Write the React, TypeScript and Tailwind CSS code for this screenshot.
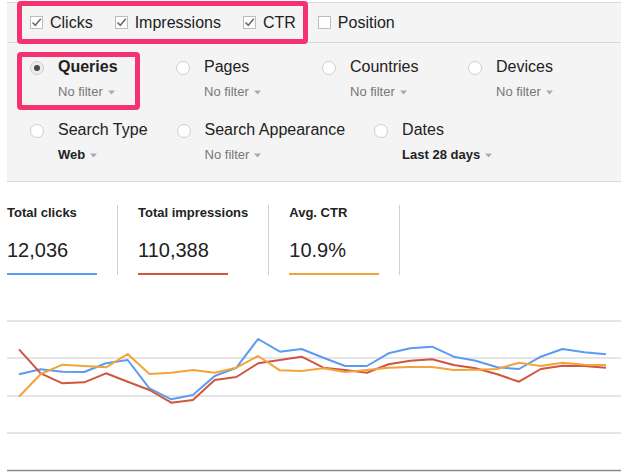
import React from 'react';

const blue = [374.3, 369.3, 371.7, 372, 363.3, 360, 388.3, 399.3, 395, 376, 367.7, 339, 351.7, 349, 357.7, 366, 366, 353.3, 348.3, 346.7, 356.7, 360.7, 367.3, 369, 356.7, 349, 352.3, 354.3];
const red = [349.3, 373.3, 383.3, 382.3, 373.3, 381.7, 390, 402.7, 400, 380, 377, 363.3, 360, 356.7, 367.7, 370, 372.7, 364.3, 360.7, 359.3, 365, 368.3, 374.3, 381.7, 369, 365.7, 366, 367.7];
const orange = [396.7, 374, 364.7, 366, 367.3, 354, 374, 372.7, 370, 372.7, 367.7, 356, 370.3, 371, 368.3, 372, 370, 367.7, 367, 367, 370, 369.7, 369, 362.7, 366, 362.7, 364.7, 365];

const toPoints = (ys: number[]) =>
  ys.map((y, i) => `${(19 + (i * 587) / 27).toFixed(1)},${(y - 300).toFixed(1)}`).join(' ');

const Caret = () => (
  <svg width="8" height="5" viewBox="0 0 8 5" className="ml-[5px]">
    <path d="M0 0.5 L7 0.5 L3.5 4.5 Z" fill="#aaaaaa" />
  </svg>
);

const Checkbox = ({ checked, label }: { checked: boolean; label: string }) => (
  <div className="flex items-center">
    <div className="w-[13px] h-[13px] border border-[#bdbdbd] bg-white flex items-center justify-center">
      {checked && (
        <svg width="11" height="11" viewBox="0 0 11 11">
          <path d="M1.5 5.5 L4.3 8.3 L9.8 1.8" fill="none" stroke="#6b6b6b" strokeWidth="1.6" />
        </svg>
      )}
    </div>
    <span className="ml-[7px] text-[16px] leading-[20px] text-[#222]">{label}</span>
  </div>
);

const Radio = ({ selected }: { selected?: boolean }) => (
  <div
    className={`mt-[4px] w-[14px] h-[14px] rounded-full border border-[#cfcfcf] flex items-center justify-center shrink-0 ${
      selected ? 'bg-[#ececec]' : 'bg-white'
    }`}
  >
    {selected && <div className="w-[6px] h-[6px] rounded-full bg-[#4a4a4a]" />}
  </div>
);

const FilterItem = ({
  label,
  value,
  selected,
  strong,
}: {
  label: string;
  value: string;
  selected?: boolean;
  strong?: boolean;
}) => (
  <div className="flex min-w-[146px] pr-[29px]">
    <Radio selected={selected} />
    <div className="ml-[14px]">
      <div className={`text-[16px] leading-[20px] text-[#222] whitespace-nowrap ${selected ? 'font-bold' : ''}`}>{label}</div>
      <div className="mt-[7px] flex items-center text-[13px] leading-[16px] whitespace-nowrap">
        <span className={strong ? 'font-bold text-[#222]' : 'text-[#777]'}>{value}</span>
        <Caret />
      </div>
    </div>
  </div>
);

const Stat = ({ label, value, color }: { label: string; value: string; color: string }) => (
  <div className="min-w-[90px] flex flex-col">
    <div className="text-[13px] leading-[16px] font-bold text-[#222] whitespace-nowrap">{label}</div>
    <div className="mt-[17px] text-[20px] leading-[24px] text-[#222]">{value}</div>
    <div className={`mt-[11px] w-[90px] h-[2px] ${color}`} />
  </div>
);

export default function App() {
  return (
    <div className="relative w-[621px] h-[472px] overflow-hidden bg-white" style={{ fontFamily: '"Liberation Sans", Arial, sans-serif' }}>
      <div className="ml-[7px] mt-[2px] bg-[#f4f4f4] border-t border-b border-[#d8d8d8]">
        <div className="h-[40px] flex items-center gap-[22px] pl-[23px] border-b border-[#d8d8d8]">
          <Checkbox checked label="Clicks" />
          <Checkbox checked label="Impressions" />
          <Checkbox checked label="CTR" />
          <Checkbox checked={false} label="Position" />
        </div>
        <div className="pl-[23px] pt-[14px] pb-[18px]">
          <div className="flex">
            <FilterItem label="Queries" value="No filter" selected />
            <FilterItem label="Pages" value="No filter" />
            <FilterItem label="Countries" value="No filter" />
            <FilterItem label="Devices" value="No filter" />
          </div>
          <div className="flex mt-[20px]">
            <FilterItem label="Search Type" value="Web" strong />
            <FilterItem label="Search Appearance" value="No filter" />
            <FilterItem label="Dates" value="Last 28 days" strong />
          </div>
        </div>
      </div>

      <div className="ml-[7px] mt-[23px] flex">
        <Stat label="Total clicks" value="12,036" color="bg-[#5b9cf2]" />
        <div className="w-px bg-[#d0d0d0] mx-[20px]" />
        <Stat label="Total impressions" value="110,388" color="bg-[#cf5640]" />
        <div className="w-px bg-[#d0d0d0] mx-[20px]" />
        <Stat label="Avg. CTR" value="10.9%" color="bg-[#f2a33a]" />
        <div className="w-px bg-[#d0d0d0] ml-[20px]" />
      </div>

      <svg className="block mt-[25px]" width="621" height="172" viewBox="0 0 621 172">
        {[21, 58, 96, 133].map((y) => (
          <line key={y} x1="7" x2="621" y1={y} y2={y} stroke="#cccccc" strokeWidth="1" />
        ))}
        <line x1="7" x2="621" y1="170.5" y2="170.5" stroke="#8a8a8a" strokeWidth="1.5" />
        <polyline points={toPoints(blue)} fill="none" stroke="#5b9cf2" strokeWidth="2" strokeLinejoin="round" />
        <polyline points={toPoints(red)} fill="none" stroke="#cf5640" strokeWidth="2" strokeLinejoin="round" />
        <polyline points={toPoints(orange)} fill="none" stroke="#f2a33a" strokeWidth="2" strokeLinejoin="round" />
      </svg>

      <div className="absolute left-[17px] top-[1px] w-[291px] h-[43px] border-[5px] border-[#f5316f] rounded-[4px]" />
      <div className="absolute left-[17px] top-[52px] w-[123px] h-[58px] border-[5px] border-[#f5316f] rounded-[4px]" />
    </div>
  );
}
